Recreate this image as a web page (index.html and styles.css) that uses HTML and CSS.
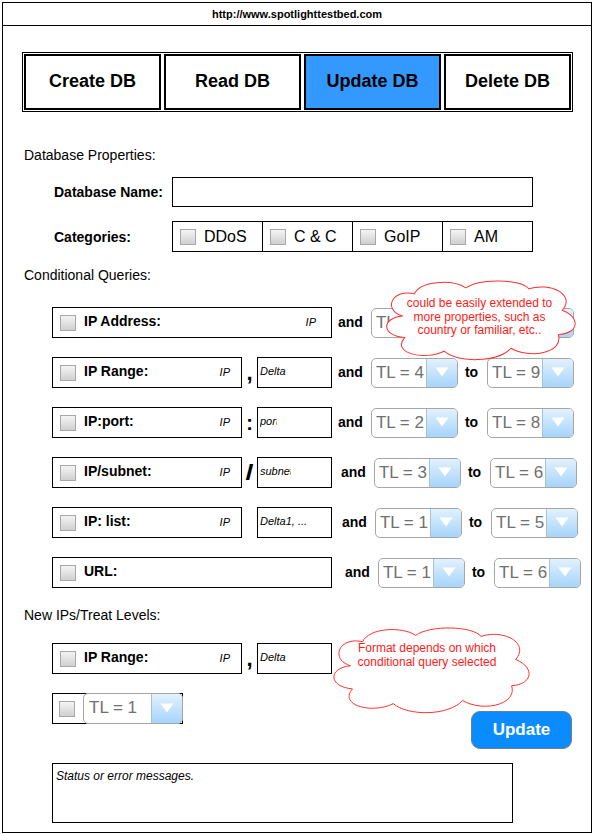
FILE: index.html
```html
<!DOCTYPE html>
<html>
<head>
<meta charset="utf-8">
<link rel="stylesheet" href="styles.css">
</head>
<body>
<div class="frame">
  <div class="urlbar">http://www.spotlighttestbed.com</div>
  <div class="content">
    <div class="tabs">
      <div class="tab">Create DB</div>
      <div class="tab">Read DB</div>
      <div class="tab active">Update DB</div>
      <div class="tab tab-last">Delete DB</div>
    </div>

    <div class="section">Database Properties:</div>
    <div class="prop">
      <div class="prop-label">Database Name:</div>
      <div class="textbox"></div>
    </div>
    <div class="prop">
      <div class="prop-label">Categories:</div>
      <div class="cats">
        <div class="cat"><span class="cb"></span>DDoS</div>
        <div class="cat"><span class="cb"></span>C &amp; C</div>
        <div class="cat"><span class="cb"></span>GoIP</div>
        <div class="cat"><span class="cb"></span>AM</div>
      </div>
    </div>

    <div class="section s-cond">Conditional Queries:</div>
    <div class="queries">
      <div class="q q-covered">
        <div class="field wide"><span class="cb"></span><span class="flabel">IP Address:</span><span class="ph">IP</span></div>
        <span class="and">and</span>
        <div class="sel"><span class="sel-val sel-part">TL</span><span class="sel-btn"><svg width="14" height="10" viewBox="0 0 14 10"><path d="M0.5 0.5 H13.5 L7 9.5 Z" fill="#fff"/></svg></span></div>
        <span class="to">to</span>
        <div class="sel"><span class="sel-val">TL = 9</span><span class="sel-btn"><svg width="14" height="10" viewBox="0 0 14 10"><path d="M0.5 0.5 H13.5 L7 9.5 Z" fill="#fff"/></svg></span></div>
      </div>
      <div class="q">
        <div class="field"><span class="cb"></span><span class="flabel">IP Range:</span><span class="ph">IP</span></div>
        <span class="sep sep-comma">,</span>
        <div class="field2">Delta</div>
        <span class="and">and</span>
        <div class="sel"><span class="sel-val">TL = 4</span><span class="sel-btn"><svg width="14" height="10" viewBox="0 0 14 10"><path d="M0.5 0.5 H13.5 L7 9.5 Z" fill="#fff"/></svg></span></div>
        <span class="to">to</span>
        <div class="sel"><span class="sel-val">TL = 9</span><span class="sel-btn"><svg width="14" height="10" viewBox="0 0 14 10"><path d="M0.5 0.5 H13.5 L7 9.5 Z" fill="#fff"/></svg></span></div>
      </div>
      <div class="q">
        <div class="field"><span class="cb"></span><span class="flabel">IP:port:</span><span class="ph">IP</span></div>
        <span class="sep">:</span>
        <div class="field2"><span class="clip clip-port">port</span></div>
        <span class="and">and</span>
        <div class="sel"><span class="sel-val">TL = 2</span><span class="sel-btn"><svg width="14" height="10" viewBox="0 0 14 10"><path d="M0.5 0.5 H13.5 L7 9.5 Z" fill="#fff"/></svg></span></div>
        <span class="to">to</span>
        <div class="sel"><span class="sel-val">TL = 8</span><span class="sel-btn"><svg width="14" height="10" viewBox="0 0 14 10"><path d="M0.5 0.5 H13.5 L7 9.5 Z" fill="#fff"/></svg></span></div>
      </div>
      <div class="q q-s3">
        <div class="field"><span class="cb"></span><span class="flabel">IP/subnet:</span><span class="ph">IP</span></div>
        <span class="sep sep-slash">/</span>
        <div class="field2"><span class="clip clip-subnet">subnet</span></div>
        <span class="and">and</span>
        <div class="sel"><span class="sel-val">TL = 3</span><span class="sel-btn"><svg width="14" height="10" viewBox="0 0 14 10"><path d="M0.5 0.5 H13.5 L7 9.5 Z" fill="#fff"/></svg></span></div>
        <span class="to">to</span>
        <div class="sel"><span class="sel-val">TL = 6</span><span class="sel-btn"><svg width="14" height="10" viewBox="0 0 14 10"><path d="M0.5 0.5 H13.5 L7 9.5 Z" fill="#fff"/></svg></span></div>
      </div>
      <div class="q q-s4">
        <div class="field"><span class="cb"></span><span class="flabel">IP: list:</span><span class="ph">IP</span></div>
        <span class="sep"></span>
        <div class="field2">Delta1, ...</div>
        <span class="and">and</span>
        <div class="sel"><span class="sel-val">TL = 1</span><span class="sel-btn"><svg width="14" height="10" viewBox="0 0 14 10"><path d="M0.5 0.5 H13.5 L7 9.5 Z" fill="#fff"/></svg></span></div>
        <span class="to">to</span>
        <div class="sel"><span class="sel-val">TL = 5</span><span class="sel-btn"><svg width="14" height="10" viewBox="0 0 14 10"><path d="M0.5 0.5 H13.5 L7 9.5 Z" fill="#fff"/></svg></span></div>
      </div>
      <div class="q q-s6">
        <div class="field wide"><span class="cb"></span><span class="flabel">URL:</span></div>
        <span class="and">and</span>
        <div class="sel"><span class="sel-val">TL = 1</span><span class="sel-btn"><svg width="14" height="10" viewBox="0 0 14 10"><path d="M0.5 0.5 H13.5 L7 9.5 Z" fill="#fff"/></svg></span></div>
        <span class="to">to</span>
        <div class="sel"><span class="sel-val">TL = 6</span><span class="sel-btn"><svg width="14" height="10" viewBox="0 0 14 10"><path d="M0.5 0.5 H13.5 L7 9.5 Z" fill="#fff"/></svg></span></div>
      </div>
    </div>

    <div class="section s-new">New IPs/Treat Levels:</div>
    <div class="q q-new">
      <div class="field"><span class="cb"></span><span class="flabel">IP Range:</span><span class="ph">IP</span></div>
      <span class="sep sep-comma">,</span>
      <div class="field2">Delta</div>
    </div>
    <div class="lower">
      <div class="combo">
        <span class="cb"></span>
        <div class="sel sel-combo"><span class="sel-val">TL = 1</span><span class="sel-btn"><svg width="14" height="10" viewBox="0 0 14 10"><path d="M0.5 0.5 H13.5 L7 9.5 Z" fill="#fff"/></svg></span></div>
      </div>
      <div class="btn">Update</div>
    </div>
    <div class="status">Status or error messages.</div>
  </div>

  <div class="cloud cloud1">
    <svg viewBox="0 0 200 80" preserveAspectRatio="none"><path d="M22 36 C2 30 10 8 34 13 C40 0 72 -2 86 7 C100 -3 142 -2 150 8 C172 1 198 14 184 30 C204 38 200 54 180 55 C186 74 150 80 132 69 C118 84 78 84 64 72 C44 82 10 74 24 58 C0 56 0 38 22 36 Z" fill="#fff" stroke="#ff3030" stroke-width="1" vector-effect="non-scaling-stroke"/></svg>
    <div class="cloud-text">could be easily extended to<br>more properties, such as<br>country or familiar, etc..</div>
  </div>
  <div class="cloud cloud2">
    <svg viewBox="0 0 200 80" preserveAspectRatio="none"><path d="M22 36 C2 30 10 8 34 13 C40 0 72 -2 86 7 C100 -3 142 -2 150 8 C172 1 198 14 184 30 C204 38 200 54 180 55 C186 74 150 80 132 69 C118 84 78 84 64 72 C44 82 10 74 24 58 C0 56 0 38 22 36 Z" fill="#fff" stroke="#ff3030" stroke-width="1" vector-effect="non-scaling-stroke"/></svg>
    <div class="cloud-text">Format depends on which<br>conditional query selected</div>
  </div>
</div>
</body>
</html>
```

FILE: styles.css
```css
html, body {
  margin: 0;
  padding: 0;
  overflow: hidden;
  background: #fff;
}

body {
  font-family: "Liberation Sans", Arial, sans-serif;
  color: #000;
}

.frame {
  position: relative;
  margin: 2px 2px 0 2px;
  width: 588px;
  height: 829px;
  border: 1px solid #000;
}

.urlbar {
  height: 22px;
  line-height: 22px;
  border-bottom: 1px solid #000;
  text-align: center;
  font-size: 11px;
  font-weight: bold;
}

.content {
  padding: 26px 0 0 21px;
}

.tabs {
  display: flex;
  gap: 3px;
  width: 551px;
  height: 60px;
  margin-left: -2px;
  padding: 1px;
  border: 1px solid #000;
  box-sizing: border-box;
}

.tab {
  flex: 0 0 137px;
  box-sizing: border-box;
  display: flex;
  align-items: center;
  justify-content: center;
  border: 2px solid #000;
  font-size: 18px;
  font-weight: bold;
  padding-bottom: 1px;
}

.tab-last {
  flex: 1;
}

.tab.active {
  background: #3399ff;
}

.section {
  font-size: 14px;
  line-height: 16px;
  margin-top: 35px;
}

.s-cond {
  margin-top: 15px;
}

.s-new {
  margin-top: 19px;
}

.prop {
  display: flex;
  align-items: center;
  margin: 14px 0 0 30px;
}

.prop-label {
  width: 118px;
  font-size: 14px;
  font-weight: bold;
}

.textbox {
  width: 361px;
  height: 30px;
  border: 1px solid #000;
  box-sizing: border-box;
}

.cats {
  display: flex;
  width: 361px;
  height: 31px;
  border: 1px solid #000;
  box-sizing: border-box;
}

.cat {
  flex: 1;
  display: flex;
  align-items: center;
  gap: 8px;
  padding-left: 7px;
  border-right: 1px solid #000;
  font-size: 16px;
}

.cat:last-child {
  border-right: 0;
}

.cb {
  flex: none;
  width: 16px;
  height: 16px;
  box-sizing: border-box;
  border: 1px solid #a8a8a8;
  background: linear-gradient(#f4f4f4, #d0d0d0);
}

.queries {
  margin-top: 24px;
}

.q {
  display: flex;
  align-items: center;
  height: 31px;
  margin: 19px 0 0 28px;
}

.queries .q:first-child {
  margin-top: 0;
}

.q-new {
  margin-top: 20px;
}

.q-covered .to,
.q-covered .sel + .to + .sel .sel-val {
  visibility: hidden;
}

.field {
  display: flex;
  align-items: center;
  width: 190px;
  height: 31px;
  box-sizing: border-box;
  border: 1px solid #000;
  padding: 0 11px 0 7px;
}

.field.wide {
  width: 280px;
  padding-right: 15px;
}

.flabel {
  flex: 1;
  margin-left: 8px;
  padding-bottom: 3px;
  font-size: 14px;
  font-weight: bold;
  white-space: nowrap;
}

.ph {
  font-style: italic;
  font-size: 11px;
  padding-bottom: 2px;
}

.sep {
  width: 15px;
  text-align: center;
  font-size: 20px;
  font-weight: bold;
  line-height: 20px;
}

.sep-comma {
  font-size: 22px;
}

.sep-slash {
  font-size: 22px;
  transform: scaleX(1.3);
}

.field2 {
  display: flex;
  align-items: center;
  width: 75px;
  height: 31px;
  box-sizing: border-box;
  border: 1px solid #000;
  padding: 0 0 3px 2px;
  font-style: italic;
  font-size: 11px;
  white-space: nowrap;
  overflow: hidden;
}

.clip {
  display: block;
  flex: none;
  overflow: hidden;
  white-space: nowrap;
}

.clip-port {
  width: 17px;
}

.clip-subnet {
  width: 31px;
}

.and {
  margin: 0 8px 0 6px;
  font-size: 14px;
  font-weight: bold;
  padding-bottom: 2px;
}

.to {
  margin: 0 9px 0 7px;
  font-size: 14px;
  font-weight: bold;
  padding-bottom: 2px;
}

.q-s3 .and {
  margin-left: 9px;
}

.q-s4 .and {
  margin-left: 10px;
}

.q-s6 .and {
  margin-left: 13px;
}

.sel {
  flex: none;
  display: flex;
  width: 87px;
  height: 30px;
  box-sizing: border-box;
  border: 1px solid #a6a6a6;
  border-radius: 5px;
  overflow: hidden;
  background: #fff;
}

.sel-val {
  flex: 1;
  padding-left: 4px;
  font-size: 17px;
  line-height: 27px;
  color: #707070;
  white-space: nowrap;
}

.sel-btn {
  flex: none;
  display: flex;
  align-items: center;
  justify-content: center;
  width: 30px;
  border-left: 1px solid #a9c2d8;
  background: linear-gradient(#e2f1fd, #a6d4fb);
}

.sel-btn svg {
  margin-top: -2px;
}

.lower {
  display: flex;
  justify-content: space-between;
  align-items: flex-start;
  width: 520px;
  margin: 19px 0 0 28px;
}

.combo {
  display: flex;
  align-items: center;
  width: 131px;
  height: 31px;
  box-sizing: border-box;
  border: 1px solid #000;
  padding-left: 6px;
}

.sel-combo {
  width: 100px;
  height: 31px;
  margin: -1px -1px -1px 8px;
}

.sel-combo .sel-val {
  padding-left: 5px;
  line-height: 28px;
}

.btn {
  display: flex;
  align-items: center;
  justify-content: center;
  margin-top: 18px;
  width: 101px;
  height: 38px;
  box-sizing: border-box;
  border: 1px solid #6d7f90;
  border-radius: 9px;
  background: #0a8cff;
  color: #fff;
  font-size: 17px;
  font-weight: bold;
}

.status {
  margin: 14px 0 0 28px;
  width: 461px;
  height: 60px;
  box-sizing: border-box;
  border: 1px solid #000;
  padding: 5px 3px;
  font-style: italic;
  font-size: 12px;
}

.cloud {
  position: absolute;
}

.cloud svg {
  position: absolute;
  left: 0;
  top: 0;
  width: 100%;
  height: 100%;
  overflow: visible;
}

.cloud-text {
  position: relative;
  color: #ff1a1a;
  font-size: 12px;
  line-height: 13.5px;
  text-align: center;
}

.cloud1 {
  left: 378px;
  top: 278px;
  width: 197px;
  height: 78px;
  padding-top: 16px;
  box-sizing: border-box;
}

.cloud2 {
  left: 325px;
  top: 625px;
  width: 204px;
  height: 84px;
  padding: 14px 6px 0 0;
  box-sizing: border-box;
}
```
